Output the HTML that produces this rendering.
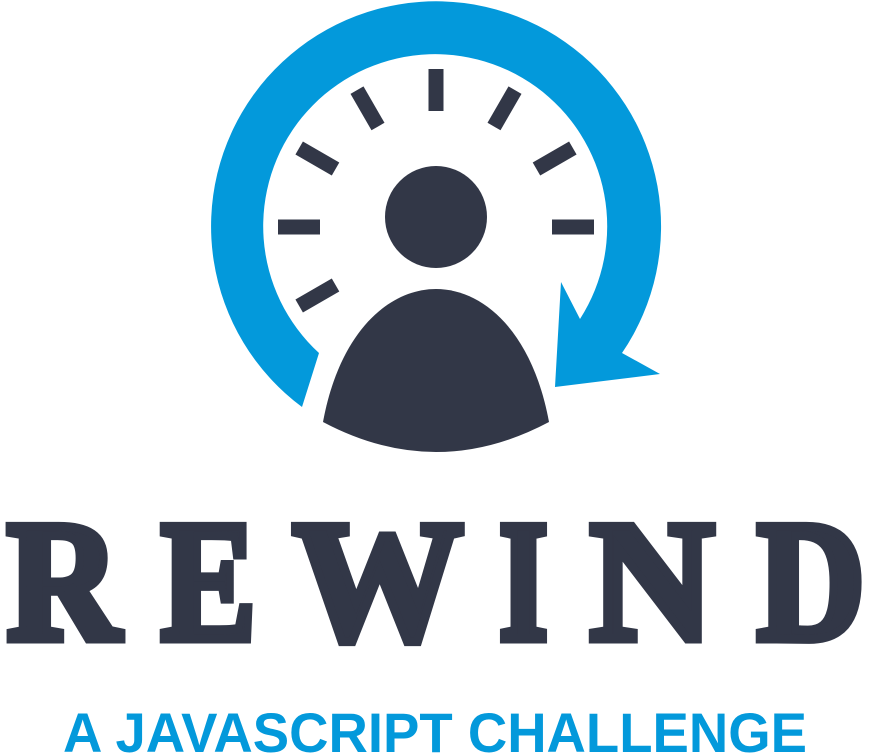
<!DOCTYPE html>
<html><head><meta charset="utf-8"><style>
html,body{margin:0;padding:0;background:#fff;width:870px;height:753px;overflow:hidden}
svg{display:block}
</style></head><body>
<svg width="870" height="753" viewBox="0 0 870 753" xmlns="http://www.w3.org/2000/svg">
<path fill="#0399db" d="M302,407 A225,225 0 1 1 622,353 L660,374 L555,387 L561,282 L580,319 A172,172 0 1 0 319,353 Z"/>
<g fill="#323747">
<g transform="translate(436,227)">
<rect x="-7.5" y="-158" width="15" height="42"/>
<rect x="-7.5" y="-158" width="15" height="42" transform="rotate(30)"/>
<rect x="-7.5" y="-158" width="15" height="42" transform="rotate(60)"/>
<rect x="-7.5" y="-158" width="15" height="42" transform="rotate(90)"/>
<rect x="-7.5" y="-158" width="15" height="42" transform="rotate(-30)"/>
<rect x="-7.5" y="-158" width="15" height="42" transform="rotate(-60)"/>
<rect x="-7.5" y="-158" width="15" height="42" transform="rotate(-90)"/>
<rect x="-7.5" y="-158" width="15" height="42" transform="rotate(-120)"/>
</g>
<circle cx="436" cy="217" r="51"/>
<path d="M323,422 C340,330 390,289 436,289 C482,289 532,330 549,422 Q436,482 323,422 Z"/>
</g>
<g font-family="'Liberation Serif',serif" font-weight="bold" font-size="172" fill="#323747" stroke="#323747" stroke-width="9" stroke-linejoin="miter">
<text x="7" y="639" textLength="113" lengthAdjust="spacingAndGlyphs">R</text>
<text x="161" y="639" textLength="95" lengthAdjust="spacingAndGlyphs">E</text>
<text x="293" y="639" textLength="170" lengthAdjust="spacingAndGlyphs">W</text>
<text x="499" y="639" textLength="49" lengthAdjust="spacingAndGlyphs">I</text>
<text x="590" y="639" textLength="124" lengthAdjust="spacingAndGlyphs">N</text>
<text x="757" y="639" textLength="108" lengthAdjust="spacingAndGlyphs">D</text>
</g>
<text x="63" y="752" font-family="'Liberation Sans',sans-serif" font-weight="bold" font-size="56" fill="#0399db" textLength="744" lengthAdjust="spacingAndGlyphs">A JAVASCRIPT CHALLENGE</text>
</svg>
</body></html>
